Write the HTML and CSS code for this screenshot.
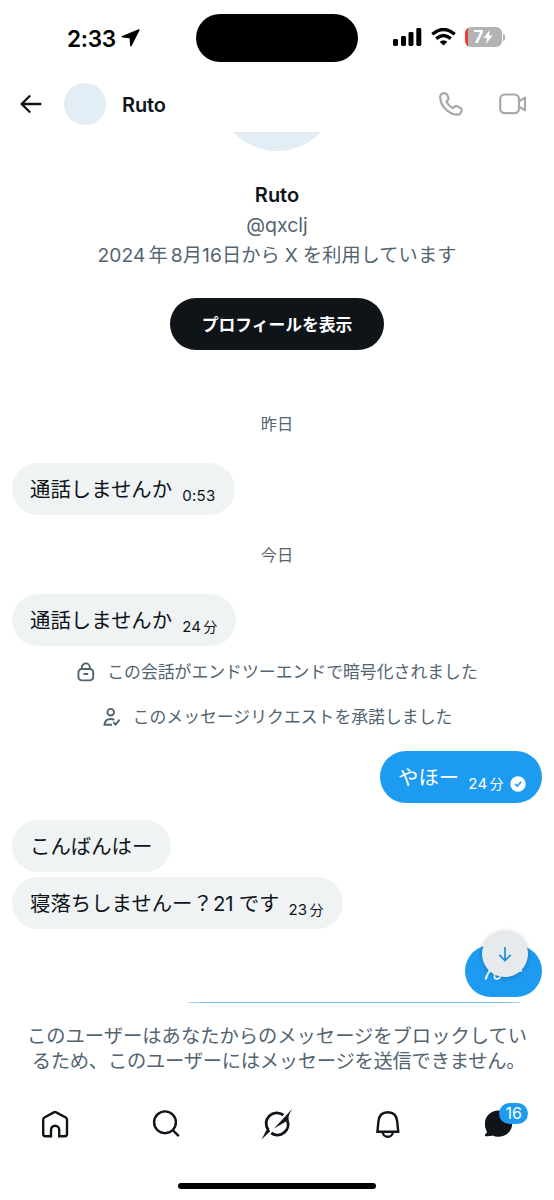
FILE: index.html
```html
<!DOCTYPE html>
<html lang="ja">
<head>
<meta charset="utf-8">
<title>Ruto</title>
<link rel="stylesheet" href="styles.css">
</head>
<body>
<div class="phone">
  <div class="status">
    <div class="clock"><span class="time">2:33</span>
      <svg class="loc" width="20" height="20" viewBox="0 0 20 20"><path d="M17.6 1.2 1.1 8.1q-1.2.9.3 1.5l7.2.6.5 7.5q.5 1.5 1.5.2L18.6 2.2q.3-1.3-1-1Z"/></svg>
    </div>
    <div class="island"></div>
    <div class="signals">
      <svg width="29" height="18" viewBox="0 0 29 18"><rect x="0" y="11" width="5" height="7" rx="1.4"/><rect x="8" y="8" width="5" height="10" rx="1.4"/><rect x="15.5" y="4" width="5" height="14" rx="1.4"/><rect x="23.3" y="0" width="5" height="18" rx="1.4"/></svg>
      <svg class="wifi" width="25" height="18" viewBox="0 0 25 18"><g fill="none" stroke="#000" stroke-width="3.4"><path d="M1.3 6.3Q12.5-3.3 23.7 6.3"/><path d="M5.2 10.6Q12.5 4.4 19.8 10.6"/></g><path d="M12.5 17.6 8.6 13.7Q12.5 10.7 16.4 13.7Z"/></svg>
      <div class="battery"><span>7</span><svg width="10" height="14" viewBox="0 0 9 13"><path fill="#fff" d="M6.2 0 .3 7.4h3.5L2.6 13 8.8 5.2H5.2Z"/></svg></div>
      <i class="nub"></i>
    </div>
  </div>
  <header class="bar">
    <svg class="back" width="22" height="20" viewBox="0 0 22 20"><path d="M10.2 1.5 1.7 10l8.5 8.5M2 10h19.3" fill="none" stroke="#0f1419" stroke-width="2.3"/></svg>
    <span class="face"></span>
    <h1 class="name">Ruto</h1>
    <svg class="call" width="26" height="26" viewBox="0 0 26 26"><path d="M2.2 6C2.2 3.6 4 2.2 6.6 2.1c1.3 0 1.8.4 2.3 1.5l1.5 3c.4.9.2 1.6-.5 2.4L8.5 10.8c1.5 3 3.4 4.9 6.4 6.3l1.8-1.5c.8-.7 1.5-.8 2.4-.4l3.1 1.5c1 .5 1.4 1 1.4 2.2-.1 3-1.9 4.9-4.4 4.8C10.4 23.1 2.2 14.9 2.2 6Z"/></svg>
    <svg class="video" width="28" height="22" viewBox="0 0 28 22"><rect x="1.2" y="1.5" width="18.8" height="18.7" rx="4.6"/><path d="m20 8.2 6-3.6v12.6l-6-3.6"/></svg>
  </header>
  <main class="chat">
    <div class="portrait"></div>
    <h2 class="fullname">Ruto</h2>
    <p class="handle">@qxclj</p>
    <p class="since"><span>2024</span><span class="y">年</span><span>8</span>月<span>16</span>日から<span class="x">X</span>を利用しています</p>
    <a class="profile">プロフィールを表示</a>
    <p class="day">昨日</p>
    <div class="msg m1"><span>通話しませんか</span><time>0:53</time></div>
    <p class="day second">今日</p>
    <div class="msg m2"><span>通話しませんか</span><time>24<b>分</b></time></div>
    <p class="note"><svg width="18" height="20" viewBox="0 0 18 20"><rect x="1.4" y="7" width="14.8" height="11.4" rx="3.4"/><path d="M4.8 7V5.4a4 4 0 0 1 8 0V7M6.4 12h4.8"/></svg><span>この会話がエンドツーエンドで暗号化されました</span></p>
    <p class="note accept"><svg width="18" height="20" viewBox="0 0 18 20"><circle cx="7.7" cy="5.2" r="3.3"/><path d="M9 17.8H1.5C1.8 13.8 4 12 7.7 12c1.5 0 2.7.3 3.6.8M10.3 15.2l2.4 2.3 3.8-4.8"/></svg><span>このメッセージリクエストを承諾しました</span></p>
    <div class="msg mine m3"><span>やほー</span><time>24<b>分</b></time><svg class="seen" width="16" height="16" viewBox="0 0 16 16"><circle cx="8" cy="8" r="7.7" fill="#fff"/><path d="m5.1 8 2.1 2.1 4-4.4" fill="none" stroke="#1d9bf0" stroke-width="1.6"/></svg></div>
    <div class="msg m4"><span>こんばんはー</span></div>
    <div class="msg m5"><span>寝落ちしませんー？<em>21</em>です</span><time>23<b>分</b></time></div>
    <div class="msg mine m6"><span>んー</span>
      <div class="jump"><svg width="16" height="18" viewBox="0 0 16 18"><path d="M8 2v13.4M2.2 9.8 8 15.6l5.8-5.8" fill="none" stroke="#1d8fdf" stroke-width="1.7"/></svg></div>
    </div>
    <div class="edge"></div>
  </main>
  <div class="blocked"><p class="b1">このユーザーはあなたからのメッセージをブロックしてい</p><p class="b2">るため、このユーザーにはメッセージを送信できません。</p></div>
  <nav class="tabs">
    <span class="tab"><svg width="30" height="30" viewBox="0 0 30 30"><path d="M3.2 10.7Q3.2 9.3 4.4 8.5L13.8 3.4q1.2-.7 2.4 0L25.8 8.5q1.2.8 1.2 2.2V25q0 2.2-2.2 2.2h-5.6v-6.4a4.1 4.1 0 0 0-8.2 0v6.4H5.4Q3.2 27.2 3.2 25Z"/></svg></span>
    <span class="tab"><svg width="30" height="30" viewBox="0 0 30 30"><circle cx="14" cy="13.3" r="10.9"/><path d="m21.6 21 6.2 6.2"/></svg></span>
    <span class="tab"><svg class="grok" width="34" height="34" viewBox="0 0 34 34"><path class="ring" d="M23.4 8.2A10.6 10.6 0 0 0 8.4 23"/><path class="ring" d="M11.3 26A10.6 10.6 0 0 0 27.3 13.4"/><path d="M1.5 32.6 7.3 21.6 10.4 24Z"/><path d="M32.6 1.6 14 21.6 26 14.4 28.8 12.6C28 9 30 5.6 32.6 1.6Z"/></svg></span>
    <span class="tab"><svg width="30" height="30" viewBox="0 0 30 30"><path d="M4.4 22.8 5.4 12.5C5.9 6.8 9.3 3.2 14.8 3.2s8.9 3.6 9.4 9.3l1 10.3ZM9.8 23.2a5 4.6 0 0 0 10 0"/></svg></span>
    <span class="tab"><svg class="bubble" width="30" height="30" viewBox="0 0 30 30"><path d="M14.6 1.4C6.7 1.4.9 7.3.9 14.6c0 3.1.7 5.5 1.6 7.2.7 1.3.2 2.3-1.4 3.6-.7.9 0 1.9 1 1.9 2.7 0 4.8-.2 6.3-.8 1.8 1 4 1.3 6.4 1.3 7.4 0 13.4-5.9 13.4-13.3S22.3 1.4 14.6 1.4Z"/></svg><span class="count">16</span></span>
  </nav>
  <div class="home"></div>
</div>
</body>
</html>
```

FILE: styles.css
```css
* { box-sizing: border-box; }
body { margin: 0; background: #fff; color: #0f1419; font-family: Inter, "Noto Sans CJK JP", sans-serif; }
h1, h2, p { margin: 0; }
svg { display: block; flex: none; }
.phone { width: 554px; height: 1200px; display: flex; flex-direction: column; overflow: hidden; }
.status { height: 76px; flex: none; display: grid; grid-template-columns: 196px 162px 1fr; color: #000; }
.clock { display: flex; height: 76px; align-items: center; padding-left: 67px; }
.time { font-size: 22.6px; font-weight: 600; letter-spacing: -.3px; width: 54px; white-space: nowrap; }
.island { height: 48px; margin-top: 14px; border-radius: 24px; background: #000; }
.signals { display: flex; align-items: center; height: 74px; padding-left: 35px; }
.wifi { margin-left: 9px; }
.battery { width: 37px; height: 20px; margin-left: 9px; border-radius: 6px; background: linear-gradient(90deg, #f03b35 3px, #b3b3b3 3px); color: #fff; font-size: 17px; font-weight: 700; display: flex; align-items: center; justify-content: center; }
.nub { width: 2px; height: 7px; margin-left: 1px; border-radius: 0 2px 2px 0; background: #b3b3b3; }
.bar { height: 56px; flex: none; display: flex; align-items: center; padding-left: 20px; }
.face { width: 42px; height: 42px; margin-left: 22px; border-radius: 50%; background: #e3edf6; }
.name { margin-left: 16px; width: 316px; font-size: 20px; font-weight: 600; line-height: 26px; padding-top: 1px; letter-spacing: -.1px; }
.call, .video { fill: none; stroke: #a6a9ab; stroke-width: 2.2; stroke-linejoin: round; }
.video { margin-left: 35px; }
.chat { height: 871px; flex: none; overflow: hidden; display: flex; flex-direction: column; align-items: flex-start; }
.portrait { flex: none; width: 120px; height: 120px; margin-top: -101px; align-self: center; border-radius: 50%; background: #e3edf6; }
.fullname, .handle, .since, .day { width: 100%; text-align: center; white-space: nowrap; flex: none; }
.fullname { margin-top: 29px; height: 30px; line-height: 30px; font-size: 20px; font-weight: 600; }
.handle { height: 30px; line-height: 30px; font-size: 19.5px; color: #536471; }
.since { height: 30px; line-height: 30px; font-size: 19.2px; letter-spacing: .08px; color: #536471; }
.since .y { margin: 0 3px; }
.since .x { margin: 0 5px; }
.profile { align-self: center; flex: none; margin-top: 28px; width: 214px; height: 52px; border-radius: 26px; background: #0f1419; color: #fff; text-align: center; line-height: 54px; font-size: 16.8px; font-weight: 600; }
.day { height: 24px; line-height: 26px; margin-top: 61px; font-size: 16.3px; color: #536471; }
.second { margin-top: 27px; }
.msg { flex: none; display: flex; height: 52px; margin-left: 12px; padding-left: 18px; border-radius: 26px; background: #eff3f4; font-size: 20.4px; line-height: 53px; white-space: nowrap; }
.msg time { margin-left: 10px; font-size: 15px; letter-spacing: .3px; line-height: 65px; }
.msg b { font-weight: 400; font-size: 14px; margin-left: 2px; }
.msg em { font-style: normal; margin-right: 5px; }
.mine { align-self: flex-end; margin-right: 12px; background: #1d9bf0; color: #fff; }
.m1 { width: 223px; margin-top: 28px; }
.m2 { width: 224px; margin-top: 28px; }
.note { flex: none; height: 24px; width: 100%; margin-top: 14px; display: flex; align-items: center; justify-content: center; font-size: 16.85px; line-height: 26px; color: #536471; gap: 12px; white-space: nowrap; padding-left: 1px; }
.note svg { fill: none; stroke: #536471; stroke-width: 1.9; }
.accept { margin-top: 21px; }
.m3 { width: 162px; margin-top: 22px; }
.m3 time, .m5 time { margin-left: 9px; }
.seen { margin: 25px 0 0 6px; }
.m4 { width: 159px; margin-top: 17px; }
.m5 { width: 331px; margin-top: 5px; }
.m6 { position: relative; width: 77px; margin-top: 16px; }
.jump { position: absolute; left: 17px; top: -14px; width: 46px; height: 46px; border-radius: 50%; background: #e6eaec; display: grid; place-items: center; box-shadow: 0 1px 5px #0004; }
.edge { flex: none; width: 332px; height: 1px; margin: 5px 0 0 188px; background: linear-gradient(90deg, #b6dcf8, #70bdf4 5%, #70bdf4 95%, #b6dcf8); }
.blocked { height: 85px; padding-top: 20px; flex: none; text-align: center; font-size: 19.3px; line-height: 26px; color: #536471; white-space: nowrap; }
.b2 { letter-spacing: -.25px; padding-left: 3px; line-height: 25px; }
.tabs { height: 72px; flex: none; display: grid; grid-template-columns: repeat(5, 1fr); }
.tab { position: relative; display: flex; justify-content: center; align-items: center; }
.tab svg { fill: none; stroke: #0f1419; stroke-width: 2.4; }
.tab .grok, .tab .bubble { fill: #0f1419; stroke: none; }
.tab .ring { fill: none; stroke: #0f1419; stroke-width: 2.8; }
.count { position: absolute; left: 56px; top: 15px; width: 29px; height: 21px; border-radius: 11px; background: #1d9bf0; color: #fff; font-size: 16px; line-height: 21px; text-align: center; }
.home { width: 198px; height: 6px; margin: 23px auto 0; border-radius: 3px; background: #000; }
```
